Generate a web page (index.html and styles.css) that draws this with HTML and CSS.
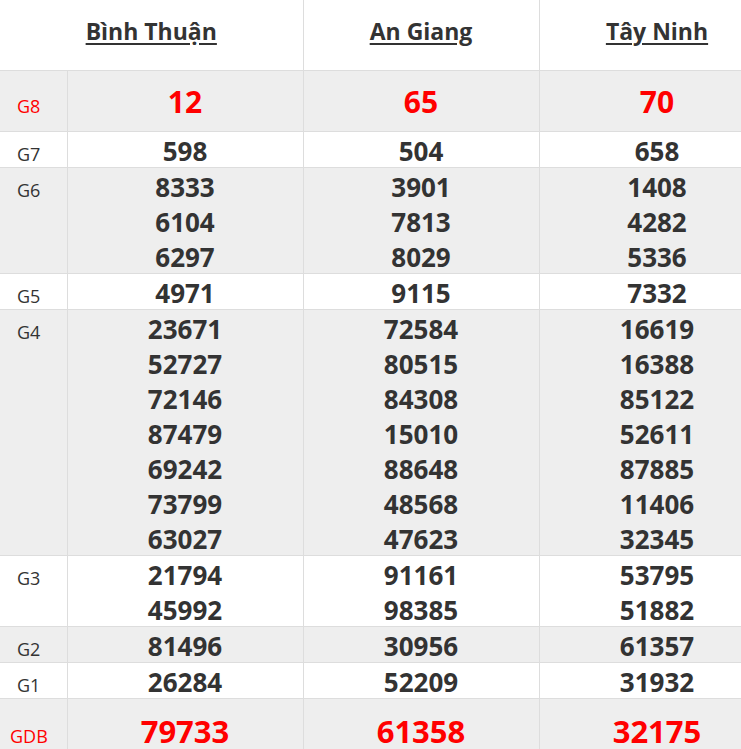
FILE: index.html
```html
<!DOCTYPE html>
<html lang="vi">
<head>
<meta charset="utf-8">
<title>Kết quả xổ số</title>
<link rel="stylesheet" href="styles.css">
</head>
<body>
<table class="kq">
  <colgroup>
    <col class="c-label"><col class="c-prov"><col class="c-prov"><col class="c-prov">
  </colgroup>
  <thead>
    <tr>
      <th colspan="2" class="prov"><a href="#">Bình Thuận</a></th>
      <th class="prov"><a href="#">An Giang</a></th>
      <th class="prov"><a href="#">Tây Ninh</a></th>
    </tr>
  </thead>
  <tbody>
    <tr class="alt g8">
      <td class="lbl red">G8</td>
      <td class="num big"><div>12</div></td>
      <td class="num big"><div>65</div></td>
      <td class="num big"><div>70</div></td>
    </tr>
    <tr>
      <td class="lbl">G7</td>
      <td class="num"><div>598</div></td>
      <td class="num"><div>504</div></td>
      <td class="num"><div>658</div></td>
    </tr>
    <tr class="alt">
      <td class="lbl">G6</td>
      <td class="num"><div>8333</div><div>6104</div><div>6297</div></td>
      <td class="num"><div>3901</div><div>7813</div><div>8029</div></td>
      <td class="num"><div>1408</div><div>4282</div><div>5336</div></td>
    </tr>
    <tr>
      <td class="lbl">G5</td>
      <td class="num"><div>4971</div></td>
      <td class="num"><div>9115</div></td>
      <td class="num"><div>7332</div></td>
    </tr>
    <tr class="alt">
      <td class="lbl">G4</td>
      <td class="num"><div>23671</div><div>52727</div><div>72146</div><div>87479</div><div>69242</div><div>73799</div><div>63027</div></td>
      <td class="num"><div>72584</div><div>80515</div><div>84308</div><div>15010</div><div>88648</div><div>48568</div><div>47623</div></td>
      <td class="num"><div>16619</div><div>16388</div><div>85122</div><div>52611</div><div>87885</div><div>11406</div><div>32345</div></td>
    </tr>
    <tr>
      <td class="lbl">G3</td>
      <td class="num"><div>21794</div><div>45992</div></td>
      <td class="num"><div>91161</div><div>98385</div></td>
      <td class="num"><div>53795</div><div>51882</div></td>
    </tr>
    <tr class="alt">
      <td class="lbl">G2</td>
      <td class="num"><div>81496</div></td>
      <td class="num"><div>30956</div></td>
      <td class="num"><div>61357</div></td>
    </tr>
    <tr>
      <td class="lbl">G1</td>
      <td class="num"><div>26284</div></td>
      <td class="num"><div>52209</div></td>
      <td class="num"><div>31932</div></td>
    </tr>
    <tr class="alt gdb">
      <td class="lbl red db">GDB</td>
      <td class="num huge"><div>79733</div></td>
      <td class="num huge"><div>61358</div></td>
      <td class="num huge"><div>32175</div></td>
    </tr>
  </tbody>
</table>
</body>
</html>
```
FILE: styles.css
```css
html, body {
  margin: 0;
  padding: 0;
  background: #fff;
  overflow: hidden;
}
body {
  font-family: "Open Sans", "Noto Sans", sans-serif;
  color: #333;
}
.kq {
  border-collapse: collapse;
  table-layout: fixed;
  width: 775px;
}
.c-label { width: 67px; }
.c-prov { width: 236px; }
.kq th, .kq td {
  border: 1px solid #ddd;
  padding: 0;
}
.kq thead th {
  border-top: none;
  border-left: none;
  height: 70px;
  padding: 0 0 8px 0;
  box-sizing: border-box;
  text-align: center;
  vertical-align: middle;
}
.prov a {
  color: #333;
  font-size: 23px;
  font-weight: 700;
  text-decoration: underline;
  text-underline-offset: 3px;
}
.kq tbody td {
  vertical-align: baseline;
}
.kq tbody td:first-child { border-left: none; }
.alt td { background: #eeeeee; }
.lbl {
  font-size: 18px;
  padding-left: 17px !important;
  color: #333;
}
.lbl.db { padding-left: 10px !important; }
.lbl.red { color: #ff0000; }
.num {
  text-align: center;
  font-weight: 700;
  font-size: 26px;
}
.num div {
  height: 35px;
  line-height: 39px;
}
.num.big div {
  height: 60px;
  line-height: 62px;
}
.num.big {
  font-size: 30px;
  color: #ff0000;
}
.num.huge div {
  height: 64px;
  line-height: 64px;
}
.num.huge {
  font-size: 31px;
  color: #ff0000;
}
```
